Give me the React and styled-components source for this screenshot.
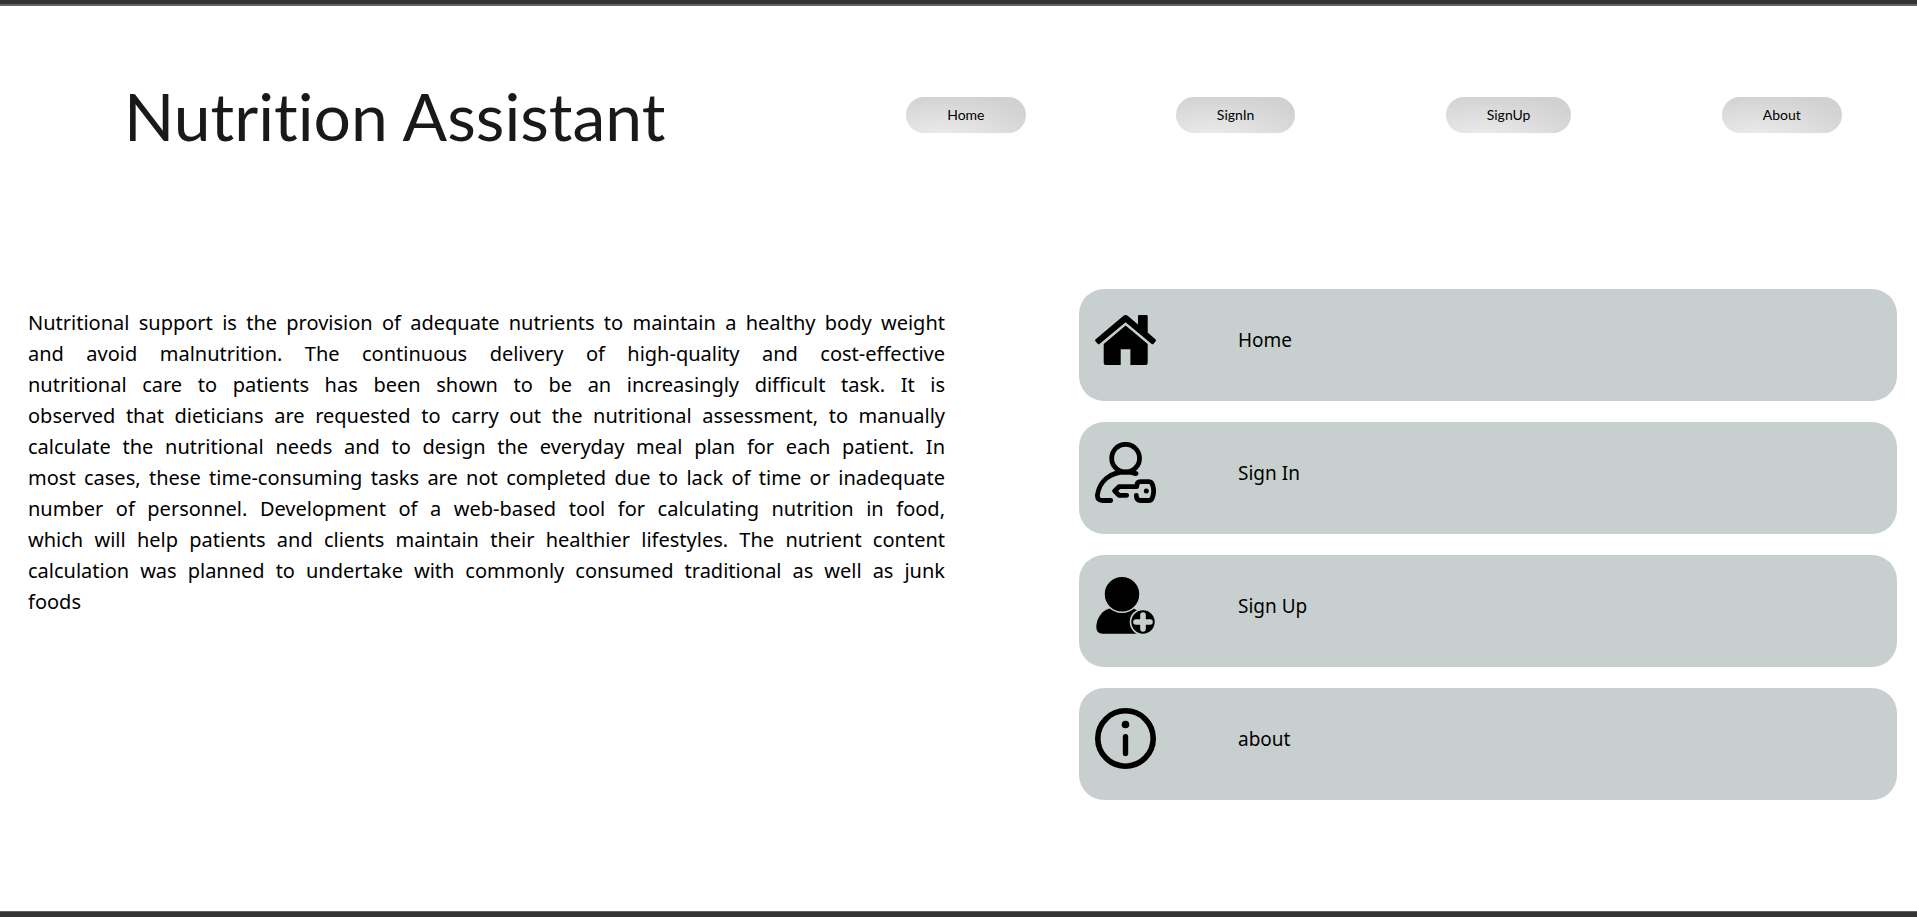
import React from "react";
import styled, { createGlobalStyle } from "styled-components";

const CARD = "#c8d0cf";

const GlobalStyle = createGlobalStyle`
  *, *::before, *::after { box-sizing: border-box; }
  body {
    margin: 0;
    background: #fff;
    color: #000;
    font-family: "Noto Sans", "Liberation Sans", sans-serif;
    font-variant-ligatures: none;
  }
`;

const Page = styled.div`
  display: flex;
  flex-direction: column;
  min-height: 100vh;
  border-top: 4px solid #333;
  border-bottom: 5px solid #333;
`;

const Rule = styled.div`
  flex: none;
  height: ${(p) => p.$size}px;
  background: #636363;
`;

const Header = styled.header`
  display: grid;
  grid-template-columns: 831fr 1086fr;
  align-items: center;
  padding-top: 68px;
`;

const Title = styled.h1`
  margin: 0;
  padding-left: 124px;
  font-family: Lato, "Noto Sans", sans-serif;
  font-size: 66px;
  font-weight: 400;
  line-height: 84px;
  color: #191919;
  white-space: nowrap;
`;

const Nav = styled.nav`
  display: flex;
  justify-content: space-around;
`;

const NavButton = styled.button`
  height: 36px;
  margin-bottom: 2px;
  padding: 0 41px;
  border: 0;
  border-radius: 18px;
  background: radial-gradient(ellipse 90% 120% at 30% 110%, #e9e9e9 10%, #d1d1d1 100%);
  font-family: Lato, "Noto Sans", sans-serif;
  font-size: 14px;
  line-height: 20px;
  color: #000;
  cursor: pointer;
`;

const Main = styled.main`
  display: grid;
  grid-template-columns: 917fr 818fr;
  column-gap: 134px;
  align-items: start;
  flex: 1;
  padding: 131px 20px 40px 28px;
`;

const Intro = styled.p`
  margin: 18px 0 0;
  font-size: 20px;
  line-height: 31px;
`;

const Line = styled.span`
  display: block;
  text-align: justify;
  text-align-last: justify;

  &:last-child {
    text-align-last: left;
  }
`;

const Cards = styled.div`
  display: flex;
  flex-direction: column;
  gap: 21px;
`;

const Card = styled.a`
  display: flex;
  align-items: center;
  gap: 82px;
  height: 112px;
  padding: 20px 16px 31px;
  border-radius: 25px;
  background: ${CARD};
  color: #000;
  font-size: 19px;
  line-height: 28px;
  text-decoration: none;
`;

const Icon = styled.svg`
  flex: none;
  width: 61px;
  height: 61px;
`;

const HomeIcon = () => (
  <Icon viewBox="0 0 61 61" aria-hidden="true">
    <path d="M28.8 6.6Q30.6 5.2 32.4 6.6L43 15.4V7.2Q43 6 44.2 6H51.5Q52.7 6 52.7 7.2V23.6L60.4 30.2Q61.4 31.3 60.6 32.3L58.6 34.8Q57.6 35.8 56.4 34.8L30.6 13.2L4.8 34.8Q3.6 35.8 2.6 34.8L.5 32.3Q-.4 31.3 .7 30.2Z" />
    <path d="M30.6 16.6L52.7 35V54Q52.7 56 50.7 56H35.4V40.3H25.7V56H10.7Q8.7 56 8.7 54V35Z" />
  </Icon>
);

const SignInIcon = () => (
  <Icon viewBox="0 0 61 61" fill="none" stroke="#000" strokeWidth="4.8" strokeLinecap="round" strokeLinejoin="round" aria-hidden="true">
    <circle cx="30.6" cy="16.2" r="13.9" />
    <path d="M41 31.6Q36 30 30.6 30C15 30 4.5 39 2.4 53Q2.2 58.5 7.5 58.5H15.7" />
    <path d="M31.7 53.3H24L19.7 49L24 44.7H41.7Q41.7 39.7 45.5 39.7H53.5Q56.3 39.7 57.3 42.2Q60 49 57.3 55.8Q56.3 58.5 53.5 58.5H45.8Q41.3 58.5 41.3 53.3" />
    <circle cx="51.3" cy="49" r="2.5" fill="#000" stroke="none" />
  </Icon>
);

const SignUpIcon = () => (
  <Icon viewBox="0 0 61 61" aria-hidden="true">
    <path d="M14.5 33.5H38.5Q45 36 48 42V58.7H7.5Q1.3 58.5 1.3 52C1.5 43 7 35.5 14.5 33.5Z" />
    <circle cx="27" cy="19.3" r="18" stroke={CARD} strokeWidth="1.5" />
    <circle cx="48" cy="47" r="12.5" stroke={CARD} strokeWidth="1.6" />
    <path d="M48 40V54M41 47H55" stroke={CARD} strokeWidth="5.6" strokeLinecap="round" />
  </Icon>
);

const AboutIcon = () => (
  <Icon viewBox="0 0 61 61" aria-hidden="true">
    <circle cx="30.5" cy="30.5" r="27.7" fill="none" stroke="#000" strokeWidth="5.6" />
    <circle cx="30.5" cy="16.5" r="3.8" />
    <path d="M30.5 28.8V45.5" stroke="#000" strokeWidth="5.4" strokeLinecap="round" />
  </Icon>
);

const navItems = ["Home", "SignIn", "SignUp", "About"];

const introLines = [
  "Nutritional support is the provision of adequate nutrients to maintain a healthy body weight",
  "and avoid malnutrition. The continuous delivery of high-quality and cost-effective",
  "nutritional care to patients has been shown to be an increasingly difficult task. It is",
  "observed that dieticians are requested to carry out the nutritional assessment, to manually",
  "calculate the nutritional needs and to design the everyday meal plan for each patient. In",
  "most cases, these time-consuming tasks are not completed due to lack of time or inadequate",
  "number of personnel. Development of a web-based tool for calculating nutrition in food,",
  "which will help patients and clients maintain their healthier lifestyles. The nutrient content",
  "calculation was planned to undertake with commonly consumed traditional as well as junk",
  "foods",
];

const cards = [
  { label: "Home", href: "#home", Glyph: HomeIcon },
  { label: "Sign In", href: "#signin", Glyph: SignInIcon },
  { label: "Sign Up", href: "#signup", Glyph: SignUpIcon },
  { label: "about", href: "#about", Glyph: AboutIcon },
];

export default function App() {
  return (
    <>
      <GlobalStyle />
      <Page>
        <Rule $size={2} />
        <Header>
          <Title>Nutrition Assistant</Title>
          <Nav>
            {navItems.map((item) => (
              <NavButton key={item} type="button">{item}</NavButton>
            ))}
          </Nav>
        </Header>
        <Main>
          <Intro>
            {introLines.map((line) => (
              <Line key={line}>{line} </Line>
            ))}
          </Intro>
          <Cards>
            {cards.map(({ label, href, Glyph }) => (
              <Card key={label} href={href}>
                <Glyph />
                <span>{label}</span>
              </Card>
            ))}
          </Cards>
        </Main>
        <Rule $size={1} />
      </Page>
    </>
  );
}
